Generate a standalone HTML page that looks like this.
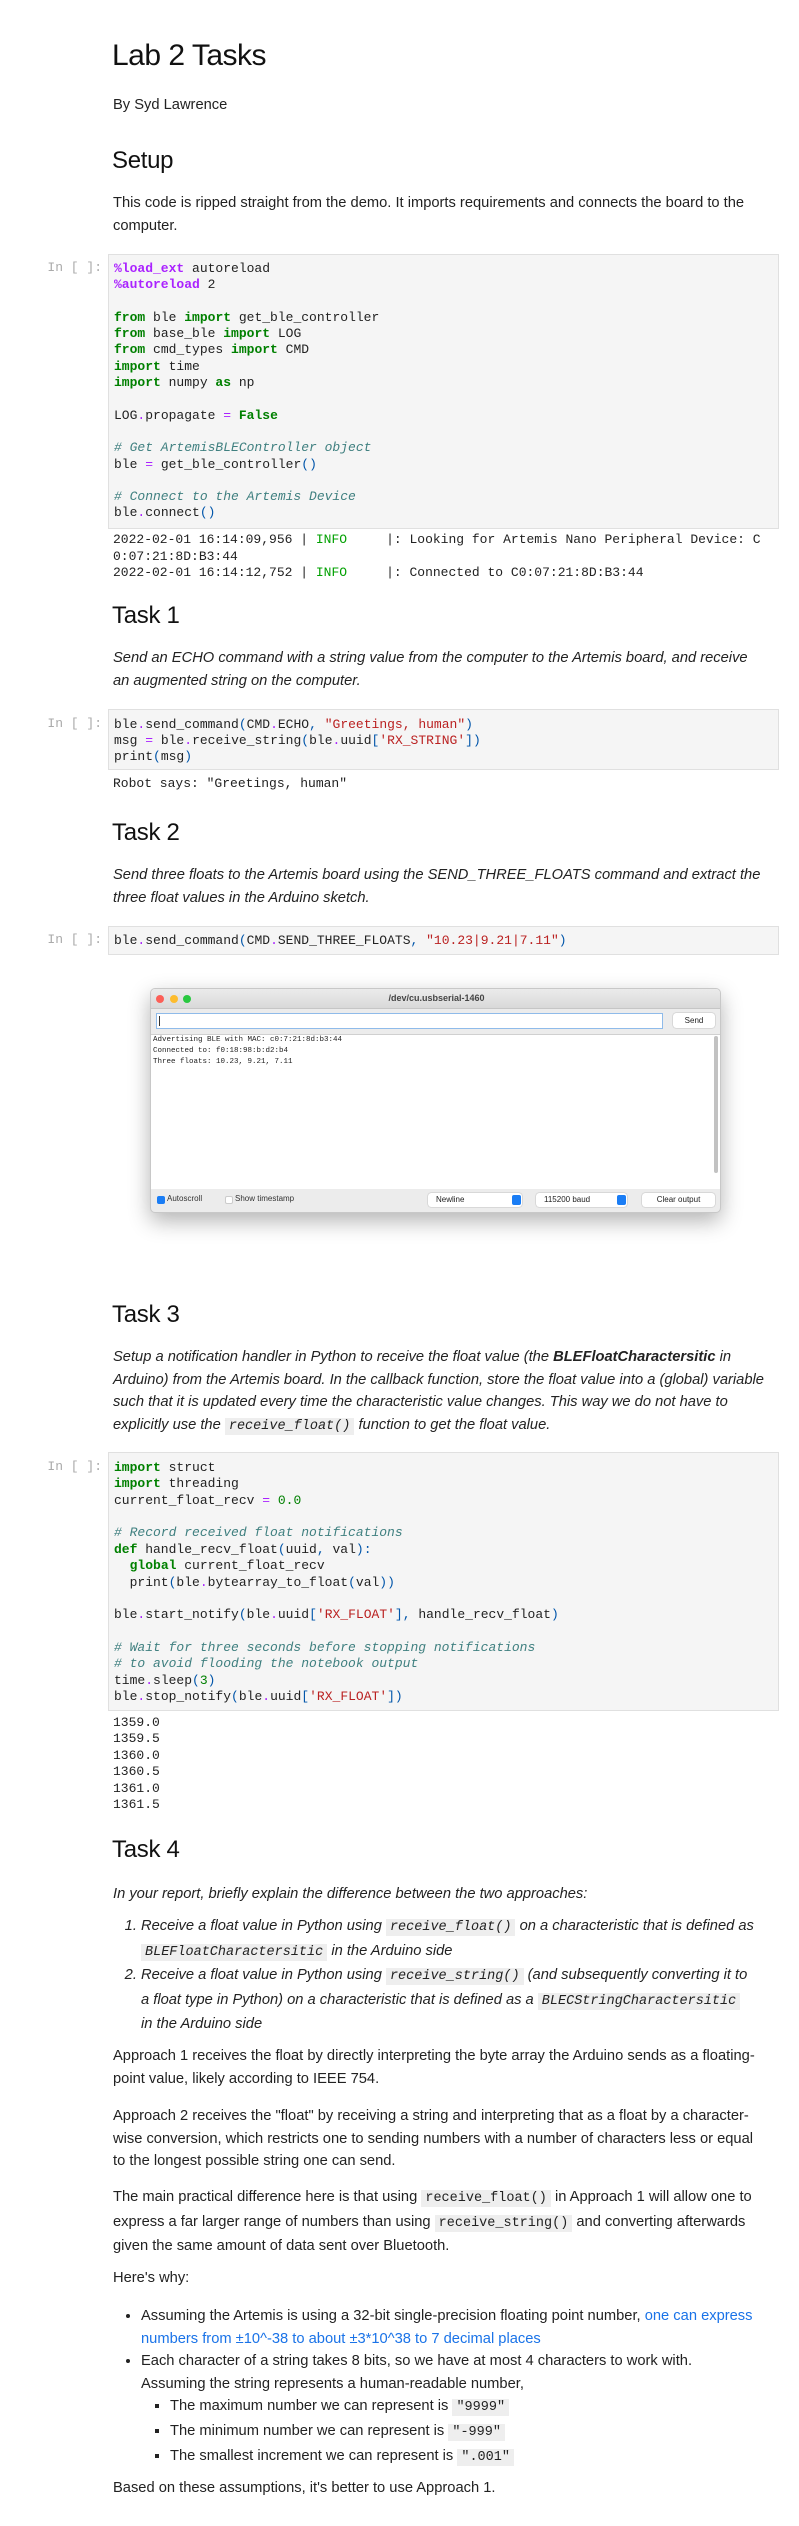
<!DOCTYPE html>
<html><head><meta charset="utf-8"><style>
*{margin:0;padding:0;box-sizing:border-box}
body{width:799px;height:2526px;background:#fff;position:relative;font-family:"Liberation Sans",sans-serif;color:#222;font-size:14.7px;overflow:hidden}
.a{position:absolute}
.t{left:113px;width:652px;line-height:22.6px;font-size:14.7px}
h1{position:absolute;left:112px;font-size:30px;font-weight:500;line-height:36px;color:#111;letter-spacing:-0.5px}
h2{position:absolute;left:112px;font-size:24px;font-weight:500;line-height:30px;color:#111;letter-spacing:-0.3px}
.cell{position:absolute;left:108px;width:671px;background:#f5f5f5;border:1px solid #e0e0e0;padding:6px 5px;font-family:"Liberation Mono",monospace;font-size:13px;white-space:pre;color:#222}
.pr{position:absolute;left:40px;width:62px;text-align:right;font-family:"Liberation Mono",monospace;font-size:13px;color:#aaa}
.out{position:absolute;left:113px;font-family:"Liberation Mono",monospace;font-size:13px;white-space:pre;color:#222}
.k{color:#008000;font-weight:bold}
.m{color:#aa22ff;font-weight:bold}
.o{color:#aa22ff}
.c{color:#408080;font-style:italic}
.s{color:#ba2121}
.p{color:#0055aa}
.n{color:#008000}
i{font-style:italic}
code{font-family:"Liberation Mono",monospace;font-size:13.5px;background:#eee;padding:1px 4px}
ol,ul{position:absolute;left:141px;width:616px;line-height:22.6px;font-size:14.7px}
ol{width:620px}
ul ul{position:static;padding-left:29px;list-style:square}
a{color:#1a73e8;text-decoration:none}
</style></head><body>

<h1 style="top:38px">Lab 2 Tasks</h1>
<div class="a t" style="top:94px">By Syd Lawrence</div>
<h2 style="top:146px">Setup</h2>
<div class="a t" style="top:192px">This code is ripped straight from the demo. It imports requirements and connects the board to the computer.</div>

<div class="pr" style="top:260px">In [ ]:</div>
<div class="cell" style="top:254px;line-height:16.3px"><span class="m">%load_ext</span> autoreload
<span class="m">%autoreload</span> 2

<span class="k">from</span> ble <span class="k">import</span> get_ble_controller
<span class="k">from</span> base_ble <span class="k">import</span> LOG
<span class="k">from</span> cmd_types <span class="k">import</span> CMD
<span class="k">import</span> time
<span class="k">import</span> numpy <span class="k">as</span> np

LOG<span class="o">.</span>propagate <span class="o">=</span> <span class="k">False</span>

<span class="c"># Get ArtemisBLEController object</span>
ble <span class="o">=</span> get_ble_controller<span class="p">()</span>

<span class="c"># Connect to the Artemis Device</span>
ble<span class="o">.</span>connect<span class="p">()</span></div>
<div class="out" style="top:532px;line-height:16.5px">2022-02-01 16:14:09,956 | <span style="color:#00a000">INFO</span>     |: Looking for Artemis Nano Peripheral Device: C
0:07:21:8D:B3:44
2022-02-01 16:14:12,752 | <span style="color:#00a000">INFO</span>     |: Connected to C0:07:21:8D:B3:44</div>

<h2 style="top:601px">Task 1</h2>
<div class="a t" style="top:647px;font-style:italic">Send an ECHO command with a string value from the computer to the Artemis board, and receive an augmented string on the computer.</div>
<div class="pr" style="top:716px">In [ ]:</div>
<div class="cell" style="top:709px;line-height:16px;padding-top:7px;height:61px">ble<span class="o">.</span>send_command<span class="p">(</span>CMD<span class="o">.</span>ECHO<span class="p">,</span> <span class="s">"Greetings, human"</span><span class="p">)</span>
msg <span class="o">=</span> ble<span class="o">.</span>receive_string<span class="p">(</span>ble<span class="o">.</span>uuid<span class="p">[</span><span class="s">'RX_STRING'</span><span class="p">])</span>
print<span class="p">(</span>msg<span class="p">)</span></div>
<div class="out" style="top:776px;line-height:16px">Robot says: "Greetings, human"</div>

<h2 style="top:818px">Task 2</h2>
<div class="a t" style="top:864px;font-style:italic">Send three floats to the Artemis board using the SEND_THREE_FLOATS command and extract the three float values in the Arduino sketch.</div>
<div class="pr" style="top:932px">In [ ]:</div>
<div class="cell" style="top:926px;line-height:16px;height:29px">ble<span class="o">.</span>send_command<span class="p">(</span>CMD<span class="o">.</span>SEND_THREE_FLOATS<span class="p">,</span> <span class="s">"10.23|9.21|7.11"</span><span class="p">)</span></div>

<div class="a" style="left:150px;top:988px;width:571px;height:225px;border-radius:5px;background:#ececec;box-shadow:0 8px 22px rgba(0,0,0,0.3);border:1px solid #c8c8c8;overflow:hidden">
  <div class="a" style="left:0;top:0;width:571px;height:20px;background:linear-gradient(#ebebeb,#d9d9d9);border-bottom:1px solid #c6c6c6"></div>
  <div class="a" style="left:5px;top:6px;width:8px;height:8px;border-radius:50%;background:#fc5f57"></div>
  <div class="a" style="left:19px;top:6px;width:8px;height:8px;border-radius:50%;background:#fdbc2e"></div>
  <div class="a" style="left:32px;top:6px;width:8px;height:8px;border-radius:50%;background:#29c840"></div>
  <div class="a" style="left:0;top:4px;width:571px;text-align:center;font-size:9px;font-weight:bold;color:#444">/dev/cu.usbserial-1460</div>
  <div class="a" style="left:5px;top:24px;width:507px;height:16px;background:#fff;border:1px solid #8fbbea"></div>
  <div class="a" style="left:8px;top:27px;width:1px;height:10px;background:#333"></div>
  <div class="a" style="left:522px;top:24px;width:42px;height:15px;background:#fff;border-radius:3px;box-shadow:0 0 1px rgba(0,0,0,.5);font-size:8px;text-align:center;line-height:15px">Send</div>
  <div class="a" style="left:0;top:45px;width:571px;height:155px;background:#fff;border-top:1px solid #d0d0d0"></div>
  <div class="a" style="left:2px;top:46px;font-family:'Liberation Mono',monospace;font-size:7.5px;line-height:10.8px;white-space:pre;color:#222">Advertising BLE with MAC: c0:7:21:8d:b3:44
Connected to: f0:18:98:b:d2:b4
Three floats: 10.23, 9.21, 7.11</div>
  <div class="a" style="left:563px;top:47px;width:4px;height:137px;border-radius:2px;background:#c2c2c2"></div>
  <div class="a" style="left:6px;top:207px;width:8px;height:8px;border-radius:2px;background:#1a7df5"></div>
  <div class="a" style="left:16px;top:205px;font-size:8px;color:#333">Autoscroll</div>
  <div class="a" style="left:74px;top:207px;width:8px;height:8px;border-radius:2px;background:#fff;border:1px solid #ccc"></div>
  <div class="a" style="left:84px;top:205px;font-size:8px;color:#333">Show timestamp</div>
  <div class="a" style="left:277px;top:204px;width:94px;height:14px;background:#fff;border-radius:3px;box-shadow:0 0 1px rgba(0,0,0,.5);font-size:8px;line-height:14px;padding-left:8px">Newline<span class="a" style="right:1px;top:2px;width:9px;height:10px;background:#1a7df5;border-radius:2px"></span></div>
  <div class="a" style="left:385px;top:204px;width:91px;height:14px;background:#fff;border-radius:3px;box-shadow:0 0 1px rgba(0,0,0,.5);font-size:8px;line-height:14px;padding-left:8px">115200 baud<span class="a" style="right:1px;top:2px;width:9px;height:10px;background:#1a7df5;border-radius:2px"></span></div>
  <div class="a" style="left:491px;top:204px;width:73px;height:14px;background:#fff;border-radius:3px;box-shadow:0 0 1px rgba(0,0,0,.5);font-size:8px;line-height:14px;text-align:center">Clear output</div>
</div>

<h2 style="top:1300px">Task 3</h2>
<div class="a t" style="top:1346px;font-style:italic;line-height:22.7px">Setup a notification handler in Python to receive the float value (the <b>BLEFloatCharactersitic</b> in Arduino) from the Artemis board. In the callback function, store the float value into a (global) variable such that it is updated every time the characteristic value changes. This way we do not have to explicitly use the <code>receive_float()</code> function to get the float value.</div>
<div class="pr" style="top:1459px">In [ ]:</div>
<div class="cell" style="top:1452px;line-height:16.36px;padding-top:7px;height:259px"><span class="k">import</span> struct
<span class="k">import</span> threading
current_float_recv <span class="o">=</span> <span class="n">0.0</span>

<span class="c"># Record received float notifications</span>
<span class="k">def</span> handle_recv_float<span class="p">(</span>uuid<span class="p">,</span> val<span class="p">):</span>
  <span class="k">global</span> current_float_recv
  print<span class="p">(</span>ble<span class="o">.</span>bytearray_to_float<span class="p">(</span>val<span class="p">))</span>

ble<span class="o">.</span>start_notify<span class="p">(</span>ble<span class="o">.</span>uuid<span class="p">[</span><span class="s">'RX_FLOAT'</span><span class="p">],</span> handle_recv_float<span class="p">)</span>

<span class="c"># Wait for three seconds before stopping notifications</span>
<span class="c"># to avoid flooding the notebook output</span>
time<span class="o">.</span>sleep<span class="p">(</span><span class="n">3</span><span class="p">)</span>
ble<span class="o">.</span>stop_notify<span class="p">(</span>ble<span class="o">.</span>uuid<span class="p">[</span><span class="s">'RX_FLOAT'</span><span class="p">])</span></div>
<div class="out" style="top:1715px;line-height:16.4px">1359.0
1359.5
1360.0
1360.5
1361.0
1361.5</div>

<h2 style="top:1835px">Task 4</h2>
<div class="a t" style="top:1883px;font-style:italic">In your report, briefly explain the difference between the two approaches:</div>
<ol style="top:1915px;font-style:italic">
<li>Receive a float value in Python using <code>receive_float()</code> on a characteristic that is defined as<br><code>BLEFloatCharactersitic</code> in the Arduino side</li>
<li>Receive a float value in Python using <code>receive_string()</code> (and subsequently converting it to<br>a float type in Python) on a characteristic that is defined as a <code>BLECStringCharactersitic</code><br>in the Arduino side</li>
</ol>
<div class="a t" style="top:2045px">Approach 1 receives the float by directly interpreting the byte array the Arduino sends as a floating-point value, likely according to IEEE 754.</div>
<div class="a t" style="top:2105px">Approach 2 receives the "float" by receiving a string and interpreting that as a float by a character-wise conversion, which restricts one to sending numbers with a number of characters less or equal to the longest possible string one can send.</div>
<div class="a t" style="top:2186px">The main practical difference here is that using <code>receive_float()</code> in Approach 1 will allow one to express a far larger range of numbers than using <code>receive_string()</code> and converting afterwards given the same amount of data sent over Bluetooth.</div>
<div class="a t" style="top:2267px">Here's why:</div>
<ul style="top:2305px">
<li>Assuming the Artemis is using a 32-bit single-precision floating point number, <a>one can express numbers from ±10^-38 to about ±3*10^38 to 7 decimal places</a></li>
<li>Each character of a string takes 8 bits, so we have at most 4 characters to work with.<br>Assuming the string represents a human-readable number,
<ul>
<li>The maximum number we can represent is <code>"9999"</code></li>
<li>The minimum number we can represent is <code>"-999"</code></li>
<li>The smallest increment we can represent is <code>".001"</code></li>
</ul></li>
</ul>
<div class="a t" style="top:2477px">Based on these assumptions, it's better to use Approach 1.</div>
</body></html>
